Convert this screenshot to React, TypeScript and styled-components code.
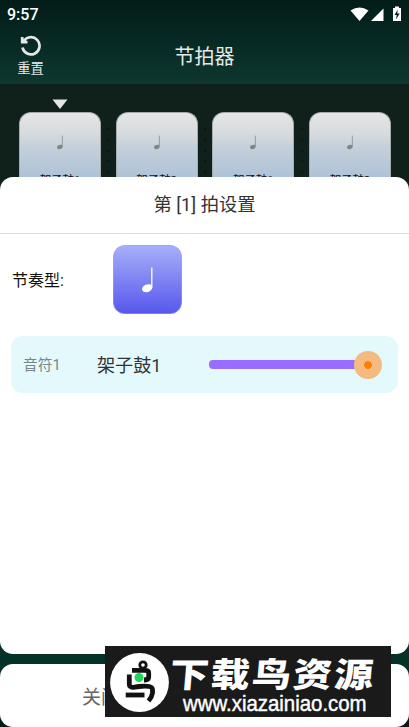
import React from 'react';
import styled, { createGlobalStyle } from 'styled-components';

const GlobalStyle = createGlobalStyle`
  * { box-sizing: border-box; }
  body { margin: 0; font-family: Roboto, "Noto Sans CJK SC", sans-serif; background: #032a23; }
`;

const Screen = styled.div`
  position: relative;
  width: 409px;
  height: 727px;
  overflow: hidden;
  display: flex;
  flex-direction: column;
  background: linear-gradient(#10211c 84px, #10211c 190px, #053229 640px, #04322a 670px, #031d19 727px);
`;

const Top = styled.header`
  height: 84px;
  flex: none;
  background: linear-gradient(#021c18, #0d372f);
  color: #e6e8e7;
`;

const StatusBar = styled.div`
  height: 28px;
  display: flex;
  align-items: center;
  justify-content: space-between;
  padding: 1px 7px 0;
  color: #fff;
  font-size: 16px;
  font-weight: 500;
  line-height: 28px;
`;

const StatusIcons = styled.svg`
  width: 53px;
  height: 16px;
  margin-top: -2px;
`;

const TitleBar = styled.div`
  height: 56px;
  display: grid;
  grid-template-columns: 61px 1fr 61px;
  align-items: center;
`;

const Reset = styled.div`
  display: flex;
  flex-direction: column;
  align-items: center;
  font-size: 13.3px;
  line-height: 16px;
  gap: 5px;
  margin-top: -2px;
`;

const Title = styled.h1`
  margin: 0;
  padding-top: 2px;
  font-size: 20px;
  font-weight: 400;
  line-height: 54px;
  text-align: center;
`;

const Beats = styled.main`
  height: 93px;
  flex: none;
  overflow: hidden;
  padding: 15px 18px 0 19px;
`;

const Pointer = styled.svg`
  display: block;
  width: 16px;
  height: 10px;
  margin: 0 0 3px 33px;
`;

const BeatRow = styled.div`
  display: flex;
  justify-content: space-between;
`;

const Beat = styled.div`
  width: 82px;
  height: 110px;
  display: flex;
  flex-direction: column;
  align-items: center;
  padding-top: 22px;
  border-radius: 12px;
  border: 1px solid #a7acad;
  border-bottom: 0;
  background: linear-gradient(#e5e5e6 0, #d7dbdd 20px, #c4cfdb 35px, #abc1d7 68px);
  color: #111;
  font-size: 11.4px;
`;

const BeatLabel = styled.span`
  margin-top: 20px;
  line-height: 20px;
`;

const Separator = styled.svg`
  width: 4px;
  height: 60px;
  margin-top: 14px;
`;

const Sheet = styled.section`
  height: 477px;
  flex: none;
  background: #fff;
  border-radius: 13px;
  overflow: hidden;
`;

const SheetTitle = styled.h2`
  margin: 0;
  height: 57px;
  border-bottom: 1px solid #dedede;
  color: #333;
  text-align: center;
  font-size: 18.3px;
  font-weight: 400;
  line-height: 56px;
`;

const RhythmRow = styled.div`
  display: flex;
  align-items: center;
  height: 91px;
  padding-left: 12px;
  color: #111;
  font-size: 16px;
`;

const RhythmLabel = styled.span`
  width: 101px;
  padding-bottom: 1px;
`;

const RhythmTile = styled.div`
  width: 69px;
  height: 69px;
  display: flex;
  align-items: center;
  justify-content: center;
  border-radius: 12px;
  border: 1px solid rgba(160, 164, 245, 0.5);
  background: linear-gradient(#a7b0f8, #5657ed) border-box;
`;

const NoteRow = styled.div`
  height: 57px;
  margin: 11px 11px 0;
  padding: 0 16px 0 12px;
  display: flex;
  align-items: center;
  border-radius: 12px;
  background: #e4f9fb;
`;

const NoteIndex = styled.span`
  width: 74px;
  padding-bottom: 2px;
  color: #7c8586;
  font-size: 14.7px;
`;

const Instrument = styled.span`
  width: 112px;
  padding-bottom: 2px;
  color: #333;
  font-size: 18.1px;
`;

const Slider = styled.div`
  flex: 1;
  display: flex;
  align-items: center;
`;

const Track = styled.div`
  flex: 1;
  height: 9px;
  border-radius: 4px 0 0 4px;
  background: #996dff;
`;

const Thumb = styled.div`
  width: 28px;
  height: 28px;
  margin-left: -1px;
  border-radius: 50%;
  background: radial-gradient(circle, #ff8000 3.5px, #f4ba80 4.3px);
`;

const Footer = styled.footer`
  height: 63px;
  flex: none;
  margin-top: 10px;
  padding: 2px 0 0 82px;
  border-radius: 13px;
  background: #fff;
  color: #666;
  font-size: 19px;
  line-height: 63px;
`;

const Watermark = styled.aside`
  position: absolute;
  left: 105px;
  top: 646px;
  width: 286px;
  height: 71px;
  display: flex;
  align-items: center;
  padding: 2px 0 0 5px;
  background: #1a1a1a;
  color: #fff;
`;

const WatermarkText = styled.div`
  display: flex;
  flex-direction: column;
  align-items: flex-start;
  height: 71px;
  padding-top: 7px;
`;

const Brand = styled.strong`
  display: block;
  margin-left: 1px;
  font: 900 39px/37px "Noto Sans CJK SC", sans-serif;
  letter-spacing: 2.1px;
  white-space: nowrap;
  transform: skewX(-5deg) scaleY(0.87);
`;

const Site = styled.span`
  margin-left: 14px;
  font: 20.4px/24px "Liberation Sans", sans-serif;
  transform: scaleY(1.08);
  -webkit-text-stroke: 0.4px #fff;
`;

const QuarterNote = ({ width, height, color }: { width: number; height: number; color: string }) => (
  <svg width={width} height={height} viewBox="0 0 11 26">
    <ellipse cx="5.2" cy="21.2" rx="5.3" ry="3.8" transform="rotate(-22 5.2 21.2)" fill={color} />
    <path d="M9.8 0.5V20.5" stroke={color} strokeWidth="1.3" />
  </svg>
);

const BirdLogo = () => (
  <svg width="59" height="59" viewBox="0 0 59 59">
    <circle cx="29.5" cy="29.5" r="29.4" fill="#fff" />
    <g fill="none" stroke="#111" strokeWidth="4.8" strokeLinejoin="round">
      <circle cx="33" cy="12" r="3.2" strokeWidth="2.8" />
      <path d="M22 17.300H35Q39 17.300 38.700 20V24Q38.500 27 34 27" />
      <path d="M19.300 21.500V31Q19.300 34.500 23 34.300L29 33.500Q42.500 32 42.500 36.500V40Q42 44 38.500 48" />
      <path d="M15.700 42H34.500" />
    </g>
    <circle cx="29" cy="24.500" r="4.5" fill="#1fd75a" />
  </svg>
);

const beats = ['架子鼓1', '架子鼓2', '架子鼓1', '架子鼓2'];

export default function App() {
  return (
    <Screen>
      <GlobalStyle />
      <Top>
        <StatusBar>
          <span>9:57</span>
          <StatusIcons viewBox="0 0 53 16" fill="#fff">
            <path d="M1.500 4.500Q10.500-1.300 19.500 4.500L10.500 15Z" />
            <path d="M22 15L34.500 2.500V15Z" />
            <path d="M44 2H46V.5H50V2H52V15H44Z" />
            <path d="M48.800 3.500L45.500 9H47.700L47 13.500L50.700 7.500H48.300Z" fill="#05231e" />
          </StatusIcons>
        </StatusBar>
        <TitleBar>
          <Reset>
            <svg width="22" height="22" viewBox="0 0 22 22" fill="none" stroke="#e6e8e7" strokeWidth="2.7">
              <path d="M3.500 7.500A8.600 8.600 0 1 1 2.500 13.500M2.200 3V8.200H7.500" />
            </svg>
            重置
          </Reset>
          <Title>节拍器</Title>
        </TitleBar>
      </Top>
      <Beats>
        <Pointer viewBox="0 0 16 10">
          <path d="M0.500 0.500H15.500L8 10Z" fill="#e5e5e6" />
        </Pointer>
        <BeatRow>
          {beats.map((name, i) => (
            <React.Fragment key={i}>
              {i > 0 && (
                <Separator viewBox="0 0 4 60" fill="#0a1713">
                  {[3, 14, 25, 35, 46].map((y) => <circle key={y} cx="2" cy={y} r="1.3" />)}
                </Separator>
              )}
              <Beat>
                <QuarterNote width={6} height={15} color="#838485" />
                <BeatLabel>{name}</BeatLabel>
              </Beat>
            </React.Fragment>
          ))}
        </BeatRow>
      </Beats>
      <Sheet>
        <SheetTitle>第 [1] 拍设置</SheetTitle>
        <RhythmRow>
          <RhythmLabel>节奏型:</RhythmLabel>
          <RhythmTile>
            <QuarterNote width={11} height={26} color="#fff" />
          </RhythmTile>
        </RhythmRow>
        <NoteRow>
          <NoteIndex>音符1</NoteIndex>
          <Instrument>架子鼓1</Instrument>
          <Slider>
            <Track />
            <Thumb />
          </Slider>
        </NoteRow>
      </Sheet>
      <Footer>关闭</Footer>
      <Watermark>
        <BirdLogo />
        <WatermarkText>
          <Brand>下载鸟资源</Brand>
          <Site>www.xiazainiao.com</Site>
        </WatermarkText>
      </Watermark>
    </Screen>
  );
}
